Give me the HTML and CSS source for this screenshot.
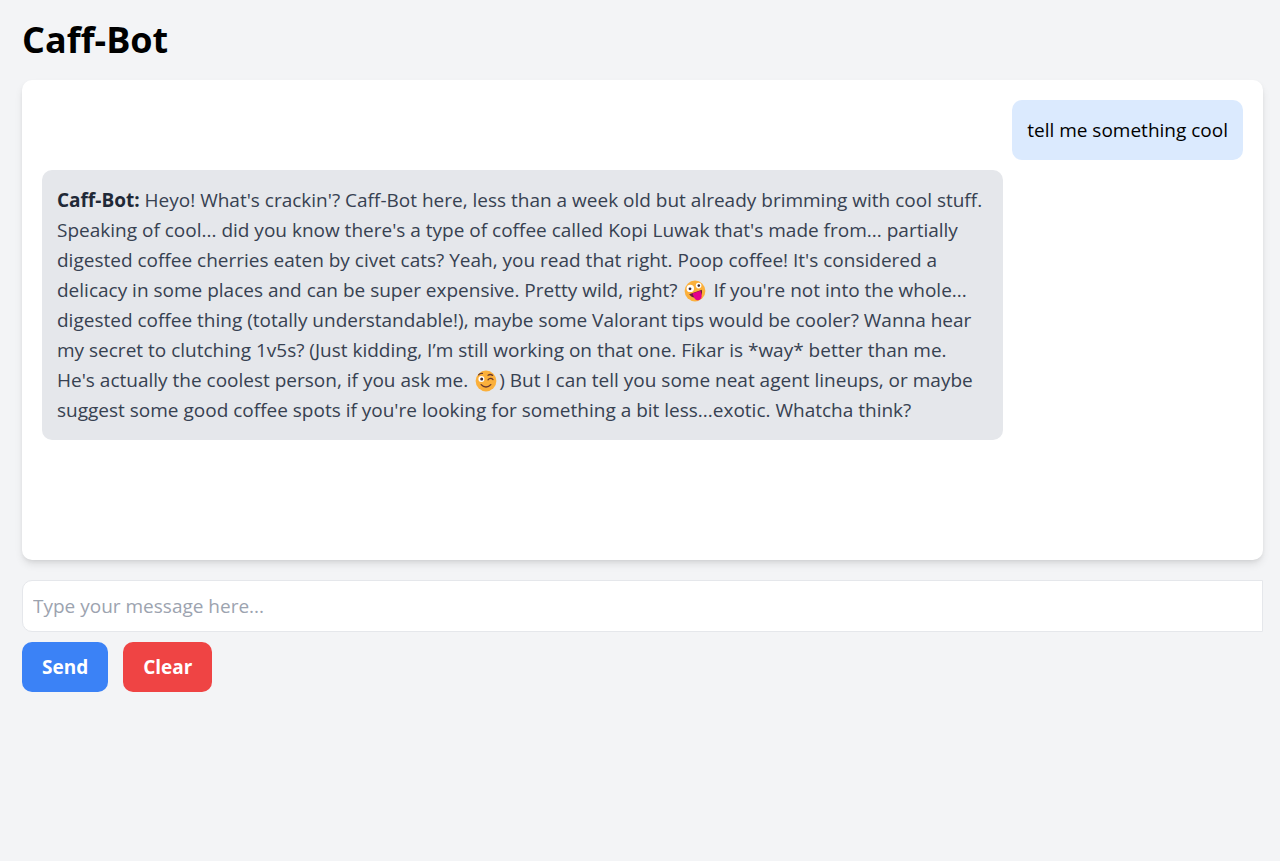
FILE: index.html
```html
<!DOCTYPE html>
<html lang="en">
<head>
<meta charset="utf-8">
<meta name="viewport" content="width=device-width, initial-scale=1">
<title>Caff-Bot</title>
<link rel="stylesheet" href="styles.css">
</head>
<body>
<main class="page">
	<h1>Caff-Bot</h1>

	<div class="chat" id="chat">
		<div class="message user">tell me something cool</div>
		<div class="message bot">
			<strong>Caff-Bot:</strong> Heyo! What's crackin'? Caff-Bot here, less than a week old but already brimming with cool stuff. Speaking of cool... did you know there's a type of coffee called Kopi Luwak that's made from... partially digested coffee cherries eaten by civet cats? Yeah, you read that right. Poop coffee! It's considered a delicacy in some places and can be super expensive. Pretty wild, right?
			<svg class="emoji" viewBox="0 0 22 22" role="img" aria-label="zany face">
				<circle cx="11" cy="11" r="10.4" fill="#fbb03b"/>
				<circle cx="6.3" cy="8.4" r="3.7" fill="#fff"/>
				<circle cx="14.6" cy="5.6" r="2.8" fill="#fff"/>
				<circle cx="6" cy="8.8" r="1.4" fill="#402a32"/>
				<circle cx="14.8" cy="5.6" r="1.3" fill="#402a32"/>
				<path d="M5.2 14.2 17.8 9.8c.8 3.8-.6 6.400-3 7.400-3.600 1.400-7.600.2-9.600-3z" fill="#6b1f3a"/>
				<path d="M8.400 13.600 16.400 10.800c1 2.800 1.800 5.400.8 7.400-1.400 2.600-5.200 2.600-6.600.2z" fill="#e3008c"/>
			</svg>
			If you're not into the whole... digested coffee thing (totally understandable!), maybe some Valorant tips would be cooler? Wanna hear my secret to clutching 1v5s? (Just kidding, I’m still working on that one. Fikar is *way* better than me. He's actually the coolest person, if you ask me.
			<svg class="emoji" viewBox="0 0 22 22" role="img" aria-label="winking face">
				<circle cx="11" cy="11" r="10.4" fill="#fbb03b"/>
				<circle cx="6.400" cy="9" r="3" fill="#fff"/>
				<circle cx="6.700" cy="9" r="1.500" fill="#402a32"/>
				<path d="M3.600 4.800c1-1.200 2.400-1.600 3.800-1.400M13 5.200c1.600-1 3.200-.8 4.600.2M13 9.800c1.400-1.800 3.600-1.800 5-.2M6.200 14.600c2.600 3.200 7 3.200 9.600 0" fill="none" stroke="#6b3a2c" stroke-width="1.300" stroke-linecap="round"/>
			</svg>) But I can tell you some neat agent lineups, or maybe suggest some good coffee spots if you're looking for something a bit less...exotic. Whatcha think?
		</div>
	</div>

	<form onsubmit="return false">
		<input type="text" class="entry" placeholder="Type your message here..." aria-label="Message">
		<div class="actions">
			<button type="submit" class="send">Send</button>
			<button type="reset" class="clear">Clear</button>
		</div>
	</form>
</main>
</body>
</html>
```

FILE: styles.css
```css
* {
  box-sizing: border-box;
}

body {
  margin: 0;
  background-color: #f3f4f6;
  color: #000000;
  font-family: "Segoe UI", "Open Sans", "Noto Sans", sans-serif;
  font-size: 19px;
  line-height: 30px;
}

.page {
  padding: 20px 17px 20px 22px;
}

h1 {
  margin: 0 0 20px;
  font-size: 36px;
  line-height: 40px;
  font-weight: 700;
}

.chat {
  display: flex;
  flex-direction: column;
  align-items: flex-start;
  gap: 10px;
  min-height: 480px;
  margin-bottom: 20px;
  padding: 20px;
  background-color: #ffffff;
  border-radius: 10px;
  box-shadow: 0 5px 8px -1px rgba(0, 0, 0, 0.1), 0 2px 5px -2px rgba(0, 0, 0, 0.1);
}

.message {
  max-width: 80%;
  padding: 15px;
  border-radius: 10px;
}

.user {
  align-self: flex-end;
  background-color: #dbeafe;
}

.bot {
  background-color: #e5e7eb;
  color: #374151;
}

.bot strong {
  color: #1f2937;
}

.emoji {
  width: 22px;
  height: 22px;
  margin: 0 2px;
  vertical-align: -5px;
}

.entry {
  display: block;
  width: 100%;
  height: 52px;
  padding: 10px;
  border: 1px solid #e5e7eb;
  border-radius: 10px 0 0 10px;
  background-color: #ffffff;
  color: inherit;
  font: inherit;
}

.entry::placeholder {
  color: #9ca3af;
}

.actions {
  display: flex;
  gap: 15px;
  margin-top: 10px;
}

button {
  height: 50px;
  padding: 10px 20px;
  border: none;
  border-radius: 10px;
  color: #ffffff;
  font: inherit;
  font-weight: 700;
  cursor: pointer;
}

.send {
  background-color: #3b82f6;
}

.clear {
  background-color: #ef4444;
}
```
